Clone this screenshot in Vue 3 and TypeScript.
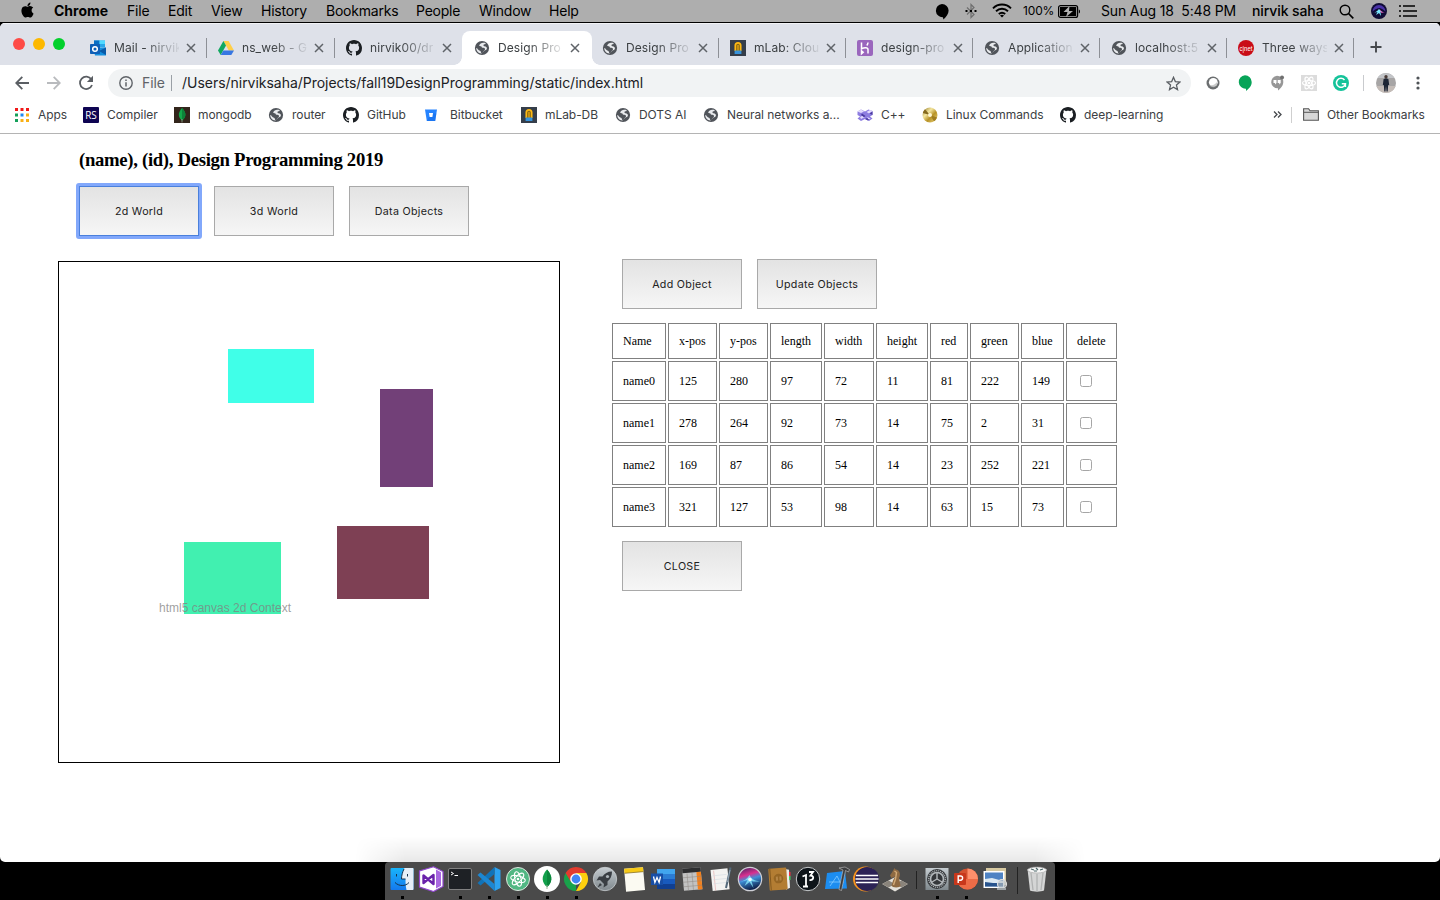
<script setup lang="ts">
import { reactive } from 'vue'

interface Entry { icon: string; label: string; w?: number; active?: boolean; sep?: boolean }
interface Box { name: string; x: number; y: number; length: number; width: number; height: number; red: number; green: number; blue: number; checked: boolean; fill: string }

const menus: Entry[] = [
  { icon: '', label: 'File', w: 41 }, { icon: '', label: 'Edit', w: 43 }, { icon: '', label: 'View', w: 50 },
  { icon: '', label: 'History', w: 65 }, { icon: '', label: 'Bookmarks', w: 90 }, { icon: '', label: 'People', w: 63 },
  { icon: '', label: 'Window', w: 70 }, { icon: '', label: 'Help', w: 60 },
]

const tabs: Entry[] = [
  { icon: 'outlook', label: 'Mail - nirvik', w: 128, sep: true },
  { icon: 'drive', label: 'ns_web - G', w: 128, sep: true },
  { icon: 'github', label: 'nirvik00/dr', w: 128 },
  { icon: 'globe', label: 'Design Pro', w: 130, active: true },
  { icon: 'globe', label: 'Design Pro', w: 128, sep: true },
  { icon: 'mlab', label: 'mLab: Clou', w: 127, sep: true },
  { icon: 'heroku', label: 'design-pro', w: 127, sep: true },
  { icon: 'globe', label: 'Application', w: 127, sep: true },
  { icon: 'globe', label: 'localhost:5', w: 127, sep: true },
  { icon: 'cnet', label: 'Three ways', w: 127, sep: true },
]

const bookmarks: Entry[] = [
  { icon: 'apps', label: 'Apps', w: 69 }, { icon: 'rs', label: 'Compiler', w: 91 },
  { icon: 'mongo', label: 'mongodb', w: 94 }, { icon: 'globe', label: 'router', w: 75 },
  { icon: 'github', label: 'GitHub', w: 80 }, { icon: 'bucket', label: 'Bitbucket', w: 98 },
  { icon: 'mlab', label: 'mLab-DB', w: 94 }, { icon: 'globe', label: 'DOTS AI', w: 88 },
  { icon: 'globe', label: 'Neural networks a...', w: 154 }, { icon: 'cpp', label: 'C++', w: 65 },
  { icon: 'disc', label: 'Linux Commands', w: 138 }, { icon: 'github', label: 'deep-learning', w: 120 },
]

const dockApps = ['finder', 'vs', 'terminal', 'vscode', 'atom', 'mongoapp', 'chrome', 'rocket', 'notes', 'word', 'calc', 'textedit', 'siri', 'contacts', 'p3', 'xcode', 'eclipse', 'chess']
const dockRecent = ['settings', 'ppt', 'preview']
const running = new Set(['finder', 'terminal', 'vscode', 'atom', 'mongoapp', 'chrome', 'settings', 'ppt'])

const columns = ['Name', 'x-pos', 'y-pos', 'length', 'width', 'height', 'red', 'green', 'blue', 'delete']
const boxes = reactive<Box[]>([
  { name: 'name0', x: 125, y: 280, length: 97, width: 72, height: 11, red: 81, green: 222, blue: 149, checked: false, fill: '#41f0b0' },
  { name: 'name1', x: 278, y: 264, length: 92, width: 73, height: 14, red: 75, green: 2, blue: 31, checked: false, fill: '#7e4054' },
  { name: 'name2', x: 169, y: 87, length: 86, width: 54, height: 14, red: 23, green: 252, blue: 221, checked: false, fill: '#40ffe8' },
  { name: 'name3', x: 321, y: 127, length: 53, width: 98, height: 14, red: 63, green: 15, blue: 73, checked: false, fill: '#724078' },
])
const values = (b: Box) => [b.name, b.x, b.y, b.length, b.width, b.height, b.red, b.green, b.blue]
</script>

<template>
  <div class="screen">
    <svg class="sprite" width="0" height="0">
      <defs>
        <linearGradient id="gSky" x1="0" y1="0" x2="0" y2="1"><stop offset="0" stop-color="#19b5fb" /><stop offset="1" stop-color="#1479ee" /></linearGradient>
        <linearGradient id="gGrey" x1="0" y1="0" x2="0" y2="1"><stop offset="0" stop-color="#c5ccd0" /><stop offset="1" stop-color="#7f888d" /></linearGradient>
        <linearGradient id="gSiri" x1="0" y1="0" x2="0.3" y2="1"><stop offset="0" stop-color="#35205f" /><stop offset=".4" stop-color="#d8308f" /><stop offset=".6" stop-color="#3f8fd8" /><stop offset="1" stop-color="#10254f" /></linearGradient>
        <linearGradient id="gGold" x1="0" y1="0" x2="1" y2="1"><stop offset="0" stop-color="#8d7424" /><stop offset=".35" stop-color="#f4e6a0" /><stop offset=".6" stop-color="#b89328" /><stop offset="1" stop-color="#f2dc86" /></linearGradient>

        <symbol id="globe" viewBox="0 0 16 16"><circle cx="8" cy="8" r="7.1" fill="#50545a" /><path d="M9.4 2.8C7.8 2.600 5.600 4.100 5.200 5.300c-.2.9 1 .9 1.700 1 .9.2.6 1.300 1.600 1.500 1.200.2 2.300.1 2.500 1.100.2 1-1 1.500-1.500 2.300-.5.7-1 1.700-1.900 1.900-.7 0-.5-1.200-1-1.900-.6-.8-2-.7-2.600-1.700-.5-.8-.9-1.700-1.800-1.600 0 2.700 2.200 5.400 5 5.500 1.500-.1 2-1.700 3.200-2.600.9-.7 2.200-.9 2.500-2 .3-1.400-1-2.500-2.300-2.600-.9-.1-1.300-.7-1.100-1.300.2-.7 1.400-.4 2-.9.7-.5.1-1.200-2.100-1.200z" fill="#e8eaed" /></symbol>
        <symbol id="github" viewBox="0 0 16 16"><path fill="#1b1f23" d="M8 0C3.58 0 0 3.58 0 8c0 3.54 2.29 6.53 5.47 7.59.4.07.55-.17.55-.38 0-.19-.01-.82-.01-1.49-2.01.37-2.53-.49-2.69-.94-.09-.23-.48-.94-.82-1.13-.28-.15-.68-.52-.01-.53.63-.01 1.08.58 1.23.82.72 1.21 1.87.87 2.33.66.07-.52.28-.87.51-1.07-1.78-.2-3.64-.89-3.64-3.95 0-.87.31-1.59.82-2.15-.08-.2-.36-1.02.08-2.12 0 0 .67-.21 2.2.82.64-.18 1.32-.27 2-.27s1.36.09 2 .27c1.53-1.04 2.2-.82 2.2-.82.44 1.1.16 1.92.08 2.12.51.56.82 1.27.82 2.15 0 3.07-1.87 3.75-3.65 3.95.29.25.54.73.54 1.48 0 1.07-.01 1.93-.01 2.2 0 .21.15.46.55.38A8.01 8.01 0 0 0 16 8c0-4.42-3.58-8-8-8z" /></symbol>
        <symbol id="outlook" viewBox="0 0 16 16"><path d="M4 .5h11v7H4z" fill="#28a8ea" /><path d="M4 .5h5.500v4H4z" fill="#0a6fc4" /><path d="M9.500 .5H15v3.500H9.500z" fill="#50d9ff" /><path d="M3.500 8L16 7.500V15.500H5z" fill="#1490df" /><path d="M16 7.500V15L9 11z" fill="#0a5aa8" /><rect y="4" width="10" height="10" rx=".8" fill="#0f5fb6" /><circle cx="5" cy="9" r="2.300" fill="none" stroke="#fff" stroke-width="1.500" /></symbol>
        <symbol id="drive" viewBox="0 0 16 16"><path d="M5.400 1h5.200L16 10.400h-5.200z" fill="#ffcf48" /><path d="M5.400 1L8 5.600 2.700 15 0 10.400z" fill="#11a861" /><path d="M5.400 10.400H16L13.300 15H2.700z" fill="#3777e3" /></symbol>
        <symbol id="mlab" viewBox="0 0 16 16"><path d="M0 0h16v16H0z" fill="#353e4a" /><path d="M5.300 11V5.500a2.700 2.700 0 0 1 5.400 0V11" fill="#8a6810" stroke="#fdb813" stroke-width="1.700" /><path d="M8 5v6" stroke="#fdb813" stroke-width="1" /><path d="M4.600 10.500h6.800V14H4.600z" fill="#3793dc" /></symbol>
        <symbol id="heroku" viewBox="0 0 16 16"><rect width="16" height="16" rx="2" fill="#9a66bd" /><path d="M4.500 2.500v6.300c2.500-1.200 6.500-1.600 6.500.7v4M11 2.500c0 1.300-.5 2.200-1.200 3M4.500 10.800v3l1.700-1.500z" fill="none" stroke="#fff" stroke-width="1.500" /></symbol>
        <symbol id="cnet" viewBox="0 0 16 16"><circle cx="8" cy="8" r="8" fill="#c90c16" /><text x="8" y="10.600" text-anchor="middle" font-family="Liberation Sans, sans-serif" font-size="8" textLength="13" lengthAdjust="spacingAndGlyphs" fill="#fff">c|net</text></symbol>
        <symbol id="apps" viewBox="0 0 16 16"><path d="M1 1h3v3H1zM6.500 1h3v3h-3zM12 1h3v3h-3z" fill="#f01818" /><path d="M1 6.500h3v3H1zM1 12h3v3H1z" fill="#14a05a" /><path d="M6.500 6.500h3v3h-3z" fill="#1e88f0" /><path d="M12 6.500h3v3h-3zM6.500 12h3v3h-3zM12 12h3v3h-3z" fill="#f9b016" /></symbol>
        <symbol id="rs" viewBox="0 0 16 16"><rect width="16" height="16" rx="1" fill="#0e0452" /><text x="8" y="12.200" text-anchor="middle" font-family="Open Sans, sans-serif" font-size="11.500" textLength="11.500" lengthAdjust="spacingAndGlyphs" fill="#fff">RS</text></symbol>
        <symbol id="mongo" viewBox="0 0 16 16"><path d="M0 0h16v16H0z" fill="#32251b" /><path d="M8 1c5 5 4 9.500 0 12.500C4 10.500 3.500 6 8 1z" fill="#13a84a" /><path d="M8 1c5 5 4 9.500 0 12.500z" fill="#0d8239" /><path d="M8 12v3.500" stroke="#a7b8a0" stroke-width=".7" /></symbol>
        <symbol id="bucket" viewBox="0 0 16 16"><path d="M2 2.500h12L12.200 14H3.800z" fill="#2684ff" /><path d="M8 6.500h5.300L12.200 14H3.800z" fill="#1068e6" opacity=".5" /><path d="M6 6h4l-.6 4H6.600z" fill="#fff" /></symbol>
        <symbol id="cpp" viewBox="0 0 16 16"><path d="M.5 4.500L4 2.500l4 2 3.500-2 4 1.500v4l-2.500 1.500 2.500 2-3.500 2.500L8 12l-4 2-3.500-2.500 2.500-2L.5 8z" fill="#8d7de0" /><path d="M.5 4.500L4 2.500l3 2-3 1.500zM9.500 5l3.500-2 2.500 1-3.500 2.500zM3 10l3-1.500 2 1.500-4 2zM10 10l3.500 1.500-2 1z" fill="#e3dbff" /><path d="M5 6.500l3.500 2.500-1.500 1.200L4 8zM12.500 6.500l3-2V8zM8 12l3 1.500 1-1-2-1.500z" fill="#4b3aa0" /></symbol>
        <symbol id="disc" viewBox="0 0 16 16"><circle cx="8" cy="8" r="7.500" fill="url(#gGold)" /><path d="M8 8L3 2.300A7.500 7.500 0 0 0 .8 6z" fill="#85691e" /><path d="M8 8l7 2.500a7.500 7.500 0 0 1-3 3.800z" fill="#a07d20" /><circle cx="8" cy="8" r="2" fill="#fff7d4" /></symbol>
        <symbol id="close" viewBox="0 0 10 10"><path d="M1 1l8 8M9 1L1 9" stroke="#5f6368" stroke-width="1.500" fill="none" /></symbol>

        <symbol id="finder" viewBox="0 0 26 26"><rect x="1.500" y="2" width="23" height="22" rx="1" fill="url(#gSky)" /><path d="M15.500 2c-2 3.500-3 7-3 11h4c0 4 .3 8 1 11h6.200c.5 0 .8-.4.800-1V3c0-.6-.4-1-1-1z" fill="#e5eef7" /><path d="M7.500 8v2.500M18.500 8v2.500M6 16.500c4 4 10.500 4 14 0M15 3c-1.500 3-2.500 6.500-2.500 10h4" stroke="#16324c" stroke-width="1" fill="none" /></symbol>
        <symbol id="vs" viewBox="0 0 26 26"><path d="M15.500 .8L25 5.500v15L15.500 25.500 1.500 21V5z" fill="#fff" stroke="#9247d0" stroke-width="1.200" /><path d="M18 3.500l5 2.800v13.500L18 22.500z" fill="#a867e0" /><path d="M5.500 9.500v7.500l10-8v9z" fill="none" stroke="#6a22ab" stroke-width="2.400" stroke-linejoin="round" /></symbol>
        <symbol id="terminal" viewBox="0 0 26 26"><rect x="1.500" y="2.500" width="23" height="21" rx="1.500" fill="#1e2125" stroke="#818181" /><path d="M4 6l2.500 1.500L4 9M7.500 9.500h3.500" stroke="#fff" fill="none" /></symbol>
        <symbol id="vscode" viewBox="0 0 26 26"><path d="M18.500 1L24.500 4v18l-6 3z" fill="#2da2ef" /><path d="M18.500 1v7L4.500 19.500 1.500 17z" fill="#1173b8" /><path d="M18.500 25v-7L4.500 6.500 1.500 9z" fill="#1c87d3" /></symbol>
        <symbol id="atom" viewBox="0 0 26 26"><circle cx="13" cy="13" r="11.500" fill="#51b783" stroke="#dfe6e0" stroke-width="1" /><g fill="none" stroke="#fff" stroke-width="1"><ellipse cx="13" cy="13" rx="7.500" ry="3" transform="rotate(15 13 13)" /><ellipse cx="13" cy="13" rx="7.500" ry="3" transform="rotate(75 13 13)" /><ellipse cx="13" cy="13" rx="7.500" ry="3" transform="rotate(135 13 13)" /></g><circle cx="13" cy="13" r="1.300" fill="#fff" /></symbol>
        <symbol id="mongoapp" viewBox="0 0 26 26"><circle cx="13" cy="13" r="13" fill="#fff" /><path d="M13 3.500c6.500 7 5 13.500 0 17.500-5-4-6.500-10.500 0-17.500z" fill="#12a04b" /><path d="M13 3.500c6.500 7 5 13.500 0 17.500z" fill="#0b873c" /><path d="M13 19v4" stroke="#9ab19a" /></symbol>
        <symbol id="chrome" viewBox="0 0 26 26"><path d="M13 13v12A12 12 0 0 1 2.600 7z" fill="#19a24b" /><path d="M13 7h10.400A12 12 0 0 0 2.600 7l5 8.500z" fill="#e33b2e" /><path d="M18 16l-5 9A12 12 0 0 0 23.400 7H13z" fill="#fdd00e" /><circle cx="13" cy="13" r="5.800" fill="#fff" /><circle cx="13" cy="13" r="4.400" fill="#4285f4" /></symbol>
        <symbol id="rocket" viewBox="0 0 26 26"><circle cx="13" cy="13" r="11.700" fill="url(#gGrey)" stroke="#c9ced1" stroke-width=".8" /><path d="M20 5.500c-4.500 0-7.500 2-9.500 5H7L4.500 14.500l3.500-.5 4 4-.5 3.500 4-2.500v-3.500c3-2.500 4.500-5.500 4.500-10zM8 17l-2.500 4.500L10 19z" fill="#393e43" /><circle cx="15.500" cy="10.500" r="1.600" fill="#aeb6ba" /></symbol>
        <symbol id="notes" viewBox="0 0 26 26"><g transform="rotate(-5 13 13)"><path d="M4 2h19v23H4z" fill="#fbfaf2" /><path d="M4 2h19v4.500H4z" fill="#f6c917" /><path d="M4 6.500h19" stroke="#7d6724" stroke-width=".7" /></g></symbol>
        <symbol id="word" viewBox="0 0 26 26"><path d="M7 3h18v20H7z" fill="#2b7cd3" /><path d="M7 3h18v5H7z" fill="#41a5ee" /><path d="M7 13h18v5H7z" fill="#185abd" /><path d="M7 18h18v5H7z" fill="#103f91" /><path d="M1 7.500h12v11.500H1z" fill="#174ea6" /><path d="M3.500 10.500l1.400 6L7 11.500l2.100 5 1.400-6" fill="none" stroke="#fff" stroke-width="1.300" /></symbol>
        <symbol id="calc" viewBox="0 0 26 26"><g transform="rotate(-5 13 13)"><path d="M4 2h18.500v22H4z" fill="#c2c2c2" /><path d="M4 2h18.500v4.500H4z" fill="#2d2e30" /><path d="M18 6.500h4.500V24H18z" fill="#f2801c" /><path d="M8.500 7v17M13.500 7v17M4 11h18.500M4 15.500h18.500M4 20h18.500" stroke="#8d8782" stroke-width=".5" /></g></symbol>
        <symbol id="textedit" viewBox="0 0 26 26"><g transform="rotate(-6 13 13)"><path d="M3.500 3h17v21h-17z" fill="#f3f3f1" /><path d="M6.500 4v20" stroke="#e19a9a" stroke-width=".5" /><path d="M5 9h14M5 13h14M5 17h14" stroke="#d4dbe2" stroke-width=".6" /></g><path d="M22.500 1.500L18 22" stroke="#53697a" stroke-width="2" /><path d="M22 4L19.500 16" stroke="#c8d5df" stroke-width=".6" /></symbol>
        <symbol id="siri" viewBox="0 0 26 26"><circle cx="13" cy="13" r="11.700" fill="url(#gSiri)" stroke="#cfd0d6" stroke-width="1.200" /><path d="M3 16c4-1 7-3 9.500-7 2 4 5 6 10.500 6-4 1-6 .5-8.500 0l2 7-4-6-5 4 3-6z" fill="#8ff0ff" opacity=".75" /><circle cx="13" cy="13.500" r="1.800" fill="#fff" opacity=".85" /></symbol>
        <symbol id="contacts" viewBox="0 0 26 26"><path d="M19 3l4 .8 1 18-4 2z" fill="#eee" /><path d="M23 6h1.500v4H23z" fill="#e34" /><path d="M23 10h1.500v4H23z" fill="#4c6" /><g transform="rotate(-4 13 13)"><rect x="3" y="2" width="18" height="22" rx="1" fill="#b37d33" /><path d="M4.500 2v22" stroke="#82581f" /><circle cx="12.500" cy="12.500" r="4.800" fill="#966624" /><path d="M10 10.500h2v4h-2zM13.500 10.500h2v4h-2z" fill="#b58545" /></g></symbol>
        <symbol id="p3" viewBox="0 0 26 26"><circle cx="13" cy="13" r="11.700" fill="#0e1419" stroke="#c7cacc" stroke-width="1" /><path d="M7.500 10.500l3.500-1.500v11.500M8 20.500h5M14 6h4l-2.500 3.500c4 0 3.500 5-1 4.500" stroke="#fff" stroke-width="1.800" fill="none" /></symbol>
        <symbol id="xcode" viewBox="0 0 26 26"><path d="M3 7l18-2 2 17.500L1 23z" fill="#1c8df0" /><path d="M6 20l7-10 5 10M5 16h15" stroke="#85ccff" fill="none" stroke-width=".8" /><path d="M15 2l6-1 4.500 2.500-1 2.500-3-1.500L17.500 24.500l-2.500-1L19 4z" fill="#3c3d3f" stroke="#c3c3c3" stroke-width=".6" /></symbol>
        <symbol id="eclipse" viewBox="0 0 26 26"><circle cx="12.500" cy="13" r="12.500" fill="#f7941e" /><circle cx="14" cy="13" r="12" fill="#2c2255" /><path d="M3 9.500h22M2.500 13h23M3 16.500h22" stroke="#fff" stroke-width="1.500" /></symbol>
        <symbol id="chess" viewBox="0 0 26 26"><path d="M13 11l12.800 7L13 25.500.2 18z" fill="#e4e1da" /><path d="M.2 18L6.600 14.500 13 18l-6.400 3.600zM13 18l6.400-3.500 6.400 3.500-6.400 3.600z" fill="#8a847b" /><path d="M12.500 2l1 1.500c4.500.5 5.500 5 3.500 8.500l1.500 7.500c0 2.500-8.500 2.500-9 0l1.500-5 2-4-3.500 1.500L8 9.500l2.500-4z" fill="#8f6a42" /><path d="M12.500 5l2 1.500-1 6.500-2 6" fill="none" stroke="#d3ab78" stroke-width="1.400" /></symbol>
        <symbol id="settings" viewBox="0 0 26 26"><path d="M1.500 2h23v22h-23z" fill="url(#gGrey)" /><circle cx="13" cy="13" r="10" fill="#34373a" /><circle cx="13" cy="13" r="8.300" fill="none" stroke="#b5b9bc" stroke-width="1.200" stroke-dasharray="1.100 .9" /><circle cx="13" cy="13" r="6.500" fill="none" stroke="#b3b8bb" stroke-width="1.700" /><path d="M13 13V7M13 13l-5 3M13 13l5 3" stroke="#b5b9bc" stroke-width="1.400" /></symbol>
        <symbol id="ppt" viewBox="0 0 26 26"><circle cx="14.500" cy="13" r="10.500" fill="#d35230" /><path d="M14.500 2.500A10.500 10.500 0 0 1 25 13H14.500z" fill="#ff8f6b" /><path d="M4 13h21a10.500 10.500 0 0 1-21 0z" fill="#ed6c47" /><rect x="1" y="7" width="12" height="12" rx="1" fill="#c8371b" /><path d="M5.200 17v-7h2.300a2.100 2.100 0 0 1 0 4.200H5.200" fill="none" stroke="#fff" stroke-width="1.400" /></symbol>
        <symbol id="preview" viewBox="0 0 26 26"><path d="M4 2h20v17H4z" fill="#d7c9a1" /><path d="M1.500 5h21v17h-21z" fill="#fff" /><path d="M3 6.500h18v14H3z" fill="#4f83c3" /><path d="M3 13l7-1 11 3v5.500H3z" fill="#dce9f2" /><path d="M3 16l8 1 10 0v3.500H3z" fill="#28548d" /><circle cx="20" cy="18" r="4.500" fill="#b7c0c4" fill-opacity=".65" stroke="#ddd" stroke-width="1.200" /><path d="M15 23h9" stroke="#9ca2a5" stroke-width="2" /></symbol>
        <symbol id="trash" viewBox="0 0 26 26"><path d="M3.500 3h19l-2.500 21.500c-3 1.500-11 1.500-14 0z" fill="#d4d5d5" /><path d="M7 7l2 17M13 8v17M19 7l-2 17" stroke="#b0b2b2" stroke-width="1.300" /><ellipse cx="13" cy="4" rx="9.500" ry="3" fill="#f6f6f6" stroke="#a1a1a1" stroke-width=".6" /><path d="M7 3l3 1M12 2l2 2M16 4l3-1M10 5h3" stroke="#4b6668" stroke-width="1.200" /></symbol>
      </defs>
    </svg>

    <header class="menubar">
      <svg class="apple" viewBox="0 0 24 24"><path d="M12.152 6.896c-.948 0-2.415-1.078-3.960-1.040-2.040.027-3.910 1.183-4.961 3.014-2.117 3.675-.546 9.103 1.519 12.090 1.013 1.454 2.208 3.090 3.792 3.039 1.520-.065 2.090-.987 3.935-.987 1.831 0 2.350.987 3.960.948 1.637-.026 2.676-1.480 3.676-2.948 1.156-1.688 1.636-3.325 1.662-3.415-.039-.013-3.182-1.221-3.220-4.857-.026-3.040 2.480-4.494 2.597-4.559-1.429-2.090-3.623-2.324-4.390-2.376-2-.156-3.675 1.090-4.610 1.090zM15.530 3.830c.843-1.012 1.400-2.427 1.245-3.830-1.207.052-2.662.805-3.532 1.818-.78.896-1.454 2.338-1.273 3.714 1.338.104 2.715-.688 3.559-1.701" /></svg>
      <b class="app-name">Chrome</b>
      <span v-for="m in menus" :key="m.label" class="menu" :style="{ width: m.w + 'px' }">{{ m.label }}</span>
      <div class="status">
        <svg class="s-chat" viewBox="0 0 14 18"><path d="M7 1a7 7 0 0 1 7 7c0 4-2.500 6.500-5.500 9.500L8 15A7 7 0 1 1 7 1z" /></svg>
        <svg class="s-bt" viewBox="0 0 12 16"><path d="M2 4.500l7 7L6 14.500v-13l3 3-7 7" fill="none" stroke="#6e6e6e" stroke-width="1.200" /><path d="M.5 7h2v2h-2zM5 7h2v2H5zM9.500 7h2v2h-2z" /></svg>
        <svg class="s-wifi" viewBox="0 0 20 15"><g fill="none" stroke="#000" stroke-width="1.900"><path d="M1 5.300c5-5 13-5 18 0M4 8.200c3.500-3.300 8.500-3.300 12 0M6.800 11c2-1.700 4.400-1.700 6.400 0" /></g><path d="M10 14.500l-2-2q2-1.400 4 0z" /></svg>
        <span class="pct">100%</span>
        <svg class="s-bat" viewBox="0 0 23 13"><rect x=".6" y=".6" width="19" height="11.800" rx="2" fill="none" stroke="#000" stroke-width="1.200" /><rect x="2" y="2" width="16.200" height="9" fill="#000" /><path d="M20.800 4.500c1.600.2 1.600 3.800 0 4z" /><path d="M11.500 1L5.500 7h4l-1.500 5L15 6h-4z" fill="#b0b0b0" /></svg>
        <span class="clock">Sun Aug 18&nbsp; 5:48 PM</span>
        <span class="user">nirvik saha</span>
        <svg class="s-find" viewBox="0 0 15 15"><circle cx="6" cy="6" r="4.800" fill="none" stroke="#000" stroke-width="1.400" /><path d="M9.500 9.500l4.800 4.800" stroke="#000" stroke-width="1.700" /></svg>
        <svg class="s-siri" viewBox="0 0 16 16"><circle cx="8" cy="8" r="8" fill="#100c36" /><path d="M1.500 8.500a6.500 6.500 0 0 1 13 0c-2-2-4-3-6-3.500-3 .5-5 1.500-7 3.500z" fill="#4a32a8" /><path d="M2 10c3-.5 4-2 6-4 2 2 3 3.500 6 3.500l-4.500-.5.5 4-2-3-3 2 1.500-3z" fill="#7ce8ff" /><path d="M8.500 6c2 2 3 3.500 5.500 3.500l-4 .5z" fill="#e055b4" opacity=".8" /></svg>
        <svg class="s-list" viewBox="0 0 18 12"><path d="M0 1h2M4 1h12M0 6h2M4 6h14M0 11h2M4 11h14" stroke="#000" stroke-width="1.700" /></svg>
      </div>
    </header>

    <main class="window">
      <div class="tabstrip">
        <div class="lights"><i class="red"></i><i class="amber"></i><i class="green"></i></div>
        <div v-for="(t, i) in tabs" :key="i" class="tab" :class="{ active: t.active, sep: t.sep }" :style="{ width: t.w + 'px' }">
          <svg class="fav"><use :href="'#' + t.icon" /></svg>
          <span class="tab-title">{{ t.label }}</span>
          <svg class="x"><use href="#close" /></svg>
        </div>
        <svg class="plus" viewBox="0 0 12 12"><path d="M6 .5v11M.5 6h11" stroke="#45484c" stroke-width="1.900" /></svg>
      </div>

      <div class="toolbar">
        <svg class="nav back" viewBox="0 0 14 14"><path d="M14 7H1.500M7.300 .8L1.200 7l6.100 6.200" fill="none" stroke="#5a5e63" stroke-width="1.800" /></svg>
        <svg class="nav fwd" viewBox="0 0 14 14"><path d="M0 7h12.500M6.700 .8L12.800 7l-6.100 6.200" fill="none" stroke="#b9bbbe" stroke-width="1.800" /></svg>
        <svg class="nav reload" viewBox="0 0 16 16"><path d="M13.300 4.300A6.200 6.200 0 1 0 14 10" fill="none" stroke="#5a5e63" stroke-width="1.800" /><path d="M15 .8v6.100H8.900z" fill="#5a5e63" /></svg>
        <div class="omnibox">
          <svg class="info" viewBox="0 0 14 14"><circle cx="7" cy="7" r="6.200" fill="none" stroke="#5f6368" stroke-width="1.400" /><path d="M6.250 6.200h1.500V10.500h-1.500zM6.250 3.500h1.500V5h-1.500z" fill="#5f6368" /></svg>
          <span class="scheme">File</span>
          <span class="url">/Users/nirviksaha/Projects/fall19DesignProgramming/static/index.html</span>
          <svg class="star" viewBox="0 0 14 14"><path d="M7 1.200l1.700 4 4.300.4-3.250 2.850 1 4.250L7 10.450 3.250 12.700l1-4.250L1 5.600l4.300-.4z" fill="none" stroke="#5a5e63" stroke-width="1.200" /></svg>
        </div>
        <div class="exts">
          <svg viewBox="0 0 16 16"><circle cx="8" cy="8" r="6.500" fill="#6b6e70" /><circle cx="8.300" cy="7.300" r="4.400" fill="#fff" /><path d="M4 9.500c3 1.500 6 .5 8-2.500v3l-3 2.500-4-1z" fill="#a6a8a9" opacity=".6" /></svg>
          <svg viewBox="0 0 16 16"><path d="M8 .3a6.700 6.700 0 0 1 6.700 6.700c0 4-2.500 6.500-5.700 9v-2.300A6.700 6.700 0 1 1 8 .3z" fill="#08a458" /></svg>
          <svg viewBox="0 0 16 16"><path d="M8 .7a6.300 6.300 0 0 1 6.300 6.300c0 3.800-2.500 6.300-5.300 8.500v-2.200A6.300 6.300 0 1 1 8 .7z" fill="#979797" /><path d="M4.500 5h3v3L6 9.500V8H4.500zM8.700 5h3v3l-1.500 1.500V8H8.700z" fill="#fff" /><circle cx="13" cy="2.500" r="2" fill="#707070" /></svg>
          <svg viewBox="0 0 16 16"><path d="M0 0h16v16H0z" fill="#dcdcdc" /><g fill="none" stroke="#fff" stroke-width="1.200"><ellipse cx="8" cy="8" rx="6.500" ry="2.500" /><ellipse cx="8" cy="8" rx="6.500" ry="2.500" transform="rotate(60 8 8)" /><ellipse cx="8" cy="8" rx="6.500" ry="2.500" transform="rotate(120 8 8)" /></g><circle cx="8" cy="8" r="1.300" fill="#fff" /></svg>
          <svg viewBox="0 0 16 16"><circle cx="8" cy="8" r="8" fill="#15c39a" /><path d="M11.500 5A4.500 4.500 0 1 0 12.400 8.800H8.800M12.400 8.800V12" fill="none" stroke="#fff" stroke-width="1.500" /></svg>
        </div>
        <svg class="avatar" viewBox="0 0 20 20"><circle cx="10" cy="10" r="10" fill="#a7a5a5" /><path d="M1.500 5a10 10 0 0 1 17 0z" fill="#c3c5c8" /><path d="M0.500 13h19a10 10 0 0 1-19 0z" fill="#c4bcb7" /><circle cx="10" cy="3.800" r="1.700" fill="#493b36" /><path d="M7.600 6l2.400-.8 2.400.8.8 6h-1l-.5 6.500h-1.200L10 13l-.5 5.500H8.300L7.800 12h-1z" fill="#1d2534" /></svg>
        <svg class="kebab" viewBox="0 0 4 14"><circle cx="2" cy="2" r="1.600" /><circle cx="2" cy="7" r="1.600" /><circle cx="2" cy="12" r="1.600" /></svg>
      </div>

      <nav class="bookmarks">
        <div v-for="(b, i) in bookmarks" :key="i" class="bm" :class="b.icon" :style="{ width: b.w + 'px' }">
          <svg class="fav"><use :href="'#' + b.icon" /></svg><span>{{ b.label }}</span>
        </div>
        <svg class="more" viewBox="0 0 9 7"><path d="M1 .5l3 3-3 3M5 .5l3 3-3 3" fill="none" stroke="#45484c" stroke-width="1.300" /></svg>
        <div class="other">
          <svg class="folder" viewBox="0 0 16 13"><path d="M.6 12.300V.7h5l1.400 2h8.400v9.600z" fill="#d7d7d7" stroke="#555" stroke-width="1.100" /><path d="M.6 4.300h14.800" stroke="#555" /></svg>
          <span>Other Bookmarks</span>
        </div>
      </nav>

      <section class="page">
        <h3>(name), (id), Design Programming 2019</h3>
        <div class="buttons top"><button class="focused">2d World</button><button>3d World</button><button>Data Objects</button></div>
        <div class="columns">
          <svg class="world" viewBox="0 0 500 500">
            <rect v-for="b in boxes" :key="b.name" :x="b.x" :y="b.y" :width="b.length" :height="b.width" :fill="b.fill" />
            <text x="100" y="350">html5 canvas 2d Context</text>
          </svg>
          <div class="panel">
            <div class="buttons"><button>Add Object</button><button>Update Objects</button></div>
            <table>
              <colgroup><col v-for="c in columns" :key="c" :class="'c-' + c" /></colgroup>
              <tbody>
                <tr class="head"><td v-for="c in columns" :key="c">{{ c }}</td></tr>
                <tr v-for="b in boxes" :key="b.name">
                  <td v-for="(v, i) in values(b)" :key="i">{{ v }}</td>
                  <td><input v-model="b.checked" type="checkbox" /></td>
                </tr>
              </tbody>
            </table>
            <div class="buttons"><button>CLOSE</button></div>
          </div>
        </div>
        <div class="dock-shade"></div>
      </section>
    </main>

    <footer class="desk">
      <div class="dock">
        <div v-for="d in dockApps" :key="d" class="app" :class="{ running: running.has(d) }"><svg><use :href="'#' + d" /></svg></div>
        <i class="rule"></i>
        <div v-for="d in dockRecent" :key="d" class="app" :class="{ running: running.has(d) }"><svg><use :href="'#' + d" /></svg></div>
        <i class="rule tall"></i>
        <div class="app"><svg><use href="#trash" /></svg></div>
      </div>
    </footer>
  </div>
</template>

<style>
html, body { margin: 0; background: #000; overflow: hidden; }
</style>

<style scoped>
.screen { width: 1440px; height: 900px; display: flex; flex-direction: column; background: #000; overflow: hidden; font-family: Inter, "Liberation Sans", sans-serif; color: #3c4043; }
.screen * { box-sizing: border-box; }
svg { display: block; flex: none; }
.sprite { position: absolute; }
.menubar { height: 22px; flex: none; display: flex; align-items: center; background: #aeaeae; color: #000; font-size: 14px; line-height: 22px; white-space: nowrap; margin-bottom: 1px; }
.apple { width: 15px; height: 16px; margin: -3px 19px 0 20px; }
.app-name { width: 73px; letter-spacing: 0; }
.menu { letter-spacing: -.22px; }
.status { flex: 1; display: flex; align-items: center; }
.s-chat { width: 14px; height: 17px; margin-left: 326px; }
.s-bt { width: 12px; height: 16px; margin-left: 16px; }
.s-wifi { width: 20px; height: 15px; margin-left: 15px; margin-top: -1px; }
.pct { font-size: 12px; width: 35px; margin-left: 11px; letter-spacing: -.15px; }
.s-bat { width: 23px; height: 13px; }
.clock { width: 151px; margin-left: 20px; letter-spacing: -.15px; }
.user { width: 72px; font-weight: 500; letter-spacing: -.1px; }
.s-find { width: 15px; height: 15px; margin-left: 15px; }
.s-siri { width: 16px; height: 16px; margin-left: 17px; }
.s-list { width: 18px; height: 12px; margin-left: 12px; }
.window { height: 839px; flex: none; display: flex; flex-direction: column; background: #fff; border-radius: 5px; overflow: hidden; }
.tabstrip { height: 42px; flex: none; display: flex; background: #dee1e9; border-top: 1px solid #f1f2f5; padding-top: 7px; }
.lights { width: 79px; flex: none; display: flex; gap: 8px; padding: 7px 0 0 13px; }
.lights i { width: 12px; height: 12px; border-radius: 50%; }
.red { background: #fe4b46; }
.amber { background: #fdb800; }
.green { background: #02d02c; }
.tab { height: 34px; flex: none; display: flex; align-items: center; padding: 0 11px; position: relative; }
.tab.sep::after { content: ""; position: absolute; right: 0; top: 7px; width: 1px; height: 20px; background: #8d9096; }
.tab.active { background: #fff; border-radius: 8px 8px 0 0; margin: 0 -1px; padding-left: 12px; }
.tab.active::before, .tab.active::after { content: ""; position: absolute; bottom: 0; width: 8px; height: 8px; }
.tab.active::before { left: -8px; background: radial-gradient(circle at 0 0, transparent 7.500px, #fff 8px); }
.tab.active::after { right: -8px; background: radial-gradient(circle at 100% 0, transparent 7.500px, #fff 8px); }
.fav { width: 16px; height: 16px; }
.tab-title { width: 65px; flex: none; margin-left: 8px; font-size: 12px; letter-spacing: .1px; line-height: 20px; white-space: nowrap; -webkit-mask-image: linear-gradient(90deg, #000 30px, transparent 68px); mask-image: linear-gradient(90deg, #000 30px, transparent 68px); }
.x { width: 10px; height: 10px; margin-left: 7px; }
.plus { width: 12px; height: 12px; margin: 10px 0 0 16px; }
.toolbar { height: 36px; flex: none; display: flex; align-items: center; font-size: 14px; }
.nav { width: 14px; height: 14px; }
.back { margin-left: 15px; }
.fwd { margin-left: 18px; }
.reload { width: 16px; height: 16px; margin-left: 17px; }
.omnibox { width: 1083px; height: 28px; margin-left: 14px; border-radius: 14px; background: #f1f3f4; display: flex; align-items: center; padding: 0 10px 0 11px; }
.info { width: 14px; height: 14px; }
.scheme { width: 30px; margin-left: 9px; line-height: 16px; border-right: 1px solid #9aa0a6; color: #5f6368; white-space: nowrap; letter-spacing: -.1px; }
.url { margin-left: 10px; margin-top: -2px; color: #202124; white-space: nowrap; letter-spacing: -.028px; flex: 1; }
.star { width: 15px; height: 15px; }
.exts { display: flex; gap: 16px; margin-left: 14px; width: 159px; flex: none; border-right: 1px solid #c9cbce; }
.exts svg { width: 16px; height: 16px; }
.avatar { width: 20px; height: 20px; margin-left: 12px; }
.kebab { width: 4px; height: 14px; margin-left: 20px; fill: #4f5357; }
.bookmarks { height: 33px; flex: none; display: flex; align-items: center; padding: 0 0 5px 14px; border-bottom: 1px solid #b4b4b4; font-size: 12px; letter-spacing: -.06px; line-height: 16px; white-space: nowrap; }
.bm { display: flex; flex: none; gap: 8px; align-items: center; }
.bm.bucket { gap: 11px; }
.more { width: 9px; height: 7px; margin-left: 93px; }
.other { display: flex; align-items: center; margin-left: 9px; height: 16px; border-left: 1px solid #cfcfcf; padding-left: 11px; gap: 8px; }
.folder { width: 16px; height: 13px; }
.page { flex: 1; position: relative; color: #000; font-family: "Liberation Serif", serif; padding: 15px 0 0 58px; }
h3 { margin: 0 0 0 21px; height: 22px; font-size: 18.720px; line-height: 22px; white-space: nowrap; letter-spacing: -.31px; }
.buttons { display: flex; gap: 15px; }
.buttons.top { margin: 15px 0 0 21px; }
button { position: relative; width: 120px; height: 50px; padding: 0; border: 1px solid #a9a9a9; border-radius: 0; background: linear-gradient(#e3e3e3, #f6f6f6); color: #212121; font: 10.700px Inter, "Liberation Sans", sans-serif; letter-spacing: .3px; }
button.focused { border-color: #4a80dc; }
button.focused::before { content: ""; position: absolute; inset: -4px; border: 3px solid #82a8fb; border-radius: 3px; }
.columns { display: flex; margin-top: 23px; }
.world { width: 502px; height: 502px; margin-top: 2px; border: 1px solid #000; }
.world text { font: 12px "Liberation Sans", Arial, sans-serif; fill: #808080; fill-opacity: .75; }
.panel { margin-left: 52px; }
.panel .buttons { margin-left: 10px; }
table { table-layout: fixed; width: 509px; border-collapse: separate; border-spacing: 2px; margin: 12px 0 12px -2px; font-size: 12px; }
td { border: 1px solid #808080; height: 40px; padding: 0 10px; line-height: 14px; }
.head td { height: 36px; }
.c-Name { width: 54px; } .c-x-pos, .c-y-pos, .c-green { width: 49px; } .c-length, .c-height { width: 52px; }
.c-width { width: 50px; } .c-red { width: 38px; } .c-blue { width: 43px; } .c-delete { width: 51px; }
input { appearance: none; display: block; width: 12px; height: 12px; margin: 0 0 0 3px; border: 1px solid #a6a6a6; border-radius: 2.500px; background: #fff; }
.dock-shade { position: absolute; left: 355px; bottom: 0; width: 730px; height: 26px; background: linear-gradient(transparent, rgba(0,0,0,.09)); -webkit-mask-image: linear-gradient(90deg, transparent, #000 50px, #000 680px, transparent); mask-image: linear-gradient(90deg, transparent, #000 50px, #000 680px, transparent); }
.desk { flex: 1; display: flex; justify-content: center; }
.dock { width: 670px; height: 38px; display: flex; gap: 3px; padding: 4px 5px 0 4px; background: #4a4a4a; border-radius: 4px 4px 0 0; }
.app { width: 26px; height: 34px; flex: none; position: relative; }
.app svg { width: 26px; height: 26px; }
.running::after { content: ""; position: absolute; left: 12px; bottom: 1px; width: 3px; height: 3px; background: #000; }
.rule { width: 1px; height: 18px; flex: none; background: #222; margin: 5px 4px 0 5px; }
.rule.tall { height: 27px; margin: 1px 3px 0 6px; }
</style>
